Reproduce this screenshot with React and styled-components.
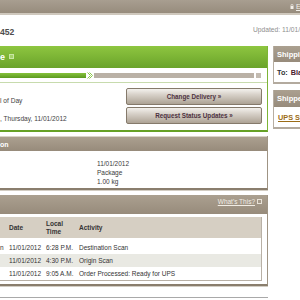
import React from "react";
import styled, { createGlobalStyle } from "styled-components";

const Global = createGlobalStyle`
  html, body { margin: 0; padding: 0; background: #fff; }
  body { font-family: "Liberation Sans", Arial, sans-serif; }
`;

const Page = styled.div`
  width: 300px;
  height: 300px;
  overflow: hidden;
  background: #fff;
`;

const TopBar = styled.div`
  height: 13px;
  border-bottom: 2px solid #cfc8bd;
  background: linear-gradient(#a89e90, #978c7d);
  display: flex;
  justify-content: flex-end;
  align-items: center;
  gap: 2px;
  font-size: 7px;
  color: #f4f0ea;
  white-space: nowrap;
  overflow: hidden;
`;

const TopLink = styled.span`
  margin-right: -19px;
  text-decoration: underline;
`;

const TitleRow = styled.div`
  height: 31px;
  display: flex;
  justify-content: space-between;
  align-items: flex-start;
  white-space: nowrap;
  overflow: hidden;
`;

const TrackNo = styled.div`
  margin-top: 12px;
  font-size: 8.6px;
  line-height: 10px;
  font-weight: bold;
  color: #4e4e4e;
`;

const Updated = styled.div`
  margin-top: 11px;
  margin-right: -15px;
  font-size: 6.7px;
  line-height: 8px;
  color: #8e8e8e;
`;

const Columns = styled.div`
  display: flex;
  gap: 5px;
  align-items: flex-start;
`;

const MainCol = styled.div`
  width: 268px;
  flex-shrink: 0;
`;

const SideCol = styled.div`
  width: 70px;
  flex-shrink: 0;
  white-space: nowrap;
  overflow: hidden;
`;

const GreenBox = styled.div`
  border-right: 1px solid #7db536;
  border-bottom: 2px solid #66a127;
`;

const GreenHeader = styled.div`
  height: 22px;
  background: linear-gradient(#8ec640, #6aa32a);
  display: flex;
  align-items: center;
  gap: 4px;
  color: #fff;
  font-weight: bold;
  font-size: 9px;
`;

const HeadIcon = styled.span`
  width: 3px;
  height: 3px;
  border: 1px solid #c9e6a4;
  background: #a3d26a;
  margin-top: -2px;
`;

const ProgressArea = styled.div`
  height: 15px;
  border-bottom: 1px solid #c7dbad;
  padding: 5px 6px 0 0;
  box-sizing: border-box;
`;

const Bar = styled.div`
  display: flex;
  align-items: center;
  height: 5px;
  gap: 1px;
`;

const GreenSeg = styled.div`
  width: 86px;
  height: 5px;
  background: linear-gradient(#86c23c, #5c9a1f);
`;

const GraySeg = styled.div`
  flex: 1;
  height: 5px;
  background: #bab1a6;
`;

const GraySq = styled.div`
  width: 5px;
  height: 5px;
  margin-left: 1px;
  background: #c3bbb1;
`;

const StatusBody = styled.div`
  height: 47px;
  display: flex;
  justify-content: space-between;
`;

const StatusText = styled.div`
  padding-top: 13px;
  font-size: 6.6px;
  line-height: 9px;
  color: #3f3f3f;
  white-space: nowrap;
`;

const StatusLine = styled.div`
  margin-bottom: ${(p) => p.$gap || 0}px;
`;

const Buttons = styled.div`
  width: 136px;
  margin-right: 5px;
  padding-top: 5px;
  display: flex;
  flex-direction: column;
  gap: 2px;
`;

const Button = styled.div`
  height: 15px;
  border: 1px solid #857a6b;
  border-radius: 2px;
  background: linear-gradient(#f3f1ed 0%, #d9d3cb 35%, #ada395 100%);
  display: flex;
  align-items: center;
  justify-content: center;
  font-size: 6.3px;
  font-weight: bold;
  color: #4d3140;
  white-space: nowrap;
`;

const Box = styled.div`
  margin-top: ${(p) => p.$top}px;
  border-right: 1px solid #9f9484;
  border-bottom: 2px solid #8a7e6d;
  box-shadow: 0 1px 0 #d3cdc3;
`;

const TaupeHeader = styled.div`
  height: ${(p) => p.$h}px;
  background: linear-gradient(#aba090, #978b7b);
  border-top: ${(p) => (p.$line ? "1px solid #d9d3c9" : "none")};
  display: flex;
  align-items: ${(p) => (p.$top ? "flex-start" : "center")};
  justify-content: ${(p) => (p.$right ? "flex-end" : "flex-start")};
  padding-top: ${(p) => (p.$top ? 3 : 0)}px;
  box-sizing: border-box;
  color: #fff;
  font-weight: bold;
  font-size: 7px;
`;

const InfoBody = styled.div`
  height: 37px;
  padding: 8px 0 0 97px;
  box-sizing: border-box;
  font-size: 6.5px;
  line-height: 9px;
  color: #3a3a3a;
`;

const WhatsThis = styled.span`
  display: flex;
  align-items: center;
  gap: 2px;
  margin-right: 5px;
  font-weight: normal;
  font-size: 6.5px;
  color: #f1ece4;
  text-decoration: underline;
`;

const InfoIcon = styled.span`
  width: 3px;
  height: 3px;
  border: 1px solid #e8e2d8;
`;

const ProgBody = styled.div`
  padding: 3px 5px 3px 0;
`;

const Table = styled.div`
  border-right: 1px solid #b9b1a6;
  border-bottom: 1px solid #b9b1a6;
  font-size: 6.5px;
  color: #333;
`;

const Row = styled.div`
  display: grid;
  grid-template-columns: 9px 37px 33px 1fr;
  align-items: center;
  height: ${(p) => p.$h || 13}px;
  padding-top: ${(p) => p.$pt || 0}px;
  box-sizing: border-box;
  background: ${(p) => p.$bg || "#fff"};
  font-weight: ${(p) => (p.$head ? "bold" : "normal")};
  line-height: 8px;
  white-space: nowrap;
`;

const Footer = styled.div`
  margin-top: 11px;
  border-top: 1px solid #a9a9a9;
`;

const SideBox = styled.div`
  margin-top: ${(p) => p.$top}px;
  border-left: 1px solid #b7aea2;
  border-bottom: 2px solid #b3aa9e;
`;

const SideHead = styled.div`
  height: ${(p) => p.$h}px;
  background: linear-gradient(#aba090, #978b7b);
  display: flex;
  align-items: center;
  padding-left: 3px;
  color: #fff;
  font-weight: bold;
  font-size: 7.5px;
`;

const SideBody = styled.div`
  height: 20px;
  display: flex;
  align-items: center;
  gap: 3px;
  padding-left: 3px;
  font-size: 7.3px;
  font-weight: bold;
  color: #333;
`;

const Maroon = styled.span`
  color: #4a2230;
`;

const Link = styled.span`
  color: #9c6c16;
  text-decoration: underline;
  padding-left: 1px;
`;

const rows = [
  { loc: "n", date: "11/01/2012", time: "6:28 P.M.", act: "Destination Scan" },
  { loc: "", date: "11/01/2012", time: "4:30 P.M.", act: "Origin Scan", bg: "#e9e9e3" },
  { loc: "", date: "11/01/2012", time: "9:05 A.M.", act: "Order Processed: Ready for UPS" },
];

export default function App() {
  return (
    <Page>
      <Global />
      <TopBar>
        <svg width="4" height="5" viewBox="0 0 4 5">
          <rect x="0.5" y="2" width="3" height="3" fill="#f2eee8" />
          <path d="M1 2V1.2a1 1 0 0 1 2 0V2" fill="none" stroke="#f2eee8" strokeWidth="0.7" />
        </svg>
        <TopLink>English</TopLink>
      </TopBar>
      <TitleRow>
        <TrackNo>452</TrackNo>
        <Updated>Updated: 11/01/2012</Updated>
      </TitleRow>
      <Columns>
        <MainCol>
          <GreenBox>
            <GreenHeader>
              <span>e</span>
              <HeadIcon />
            </GreenHeader>
            <ProgressArea>
              <Bar>
                <GreenSeg />
                <svg width="6" height="7" viewBox="0 0 6 7">
                  <path d="M0.5 0.5L3.5 3.5L0.5 6.5M2.5 0.5L5.5 3.5L2.5 6.5" fill="none" stroke="#8cc84a" strokeWidth="1" />
                </svg>
                <GraySeg />
                <GraySq />
              </Bar>
            </ProgressArea>
            <StatusBody>
              <StatusText>
                <StatusLine $gap={9}>l of Day</StatusLine>
                <StatusLine>, Thursday, 11/01/2012</StatusLine>
              </StatusText>
              <Buttons>
                <Button>Change Delivery »</Button>
                <Button>Request Status Updates »</Button>
              </Buttons>
            </StatusBody>
          </GreenBox>
          <Box $top={4}>
            <TaupeHeader $h={15} $line>on</TaupeHeader>
            <InfoBody>
              <div>11/01/2012</div>
              <div>Package</div>
              <div>1.00 kg</div>
            </InfoBody>
          </Box>
          <Box $top={5}>
            <TaupeHeader $h={19} $right $top>
              <WhatsThis>
                What's This? <InfoIcon />
              </WhatsThis>
            </TaupeHeader>
            <ProgBody>
              <Table>
                <Row $head $h={21} $bg="#d6cfc3">
                  <span />
                  <span>Date</span>
                  <span>
                    Local
                    <br />
                    Time
                  </span>
                  <span>Activity</span>
                </Row>
                {rows.map((r, i) => (
                  <Row key={i} $h={i === 0 ? 16 : 13} $pt={i === 0 ? 3 : 0} $bg={r.bg}>
                    <span>{r.loc}</span>
                    <span>{r.date}</span>
                    <span>{r.time}</span>
                    <span>{r.act}</span>
                  </Row>
                ))}
              </Table>
            </ProgBody>
          </Box>
          <Footer />
        </MainCol>
        <SideCol>
          <SideBox $top={0}>
            <SideHead $h={16}>Shipping To</SideHead>
            <SideBody>
              <span>To:</span>
              <Maroon>Blank</Maroon>
            </SideBody>
          </SideBox>
          <SideBox $top={6}>
            <SideHead $h={17}>Shipped By</SideHead>
            <SideBody>
              <Link>UPS Store</Link>
            </SideBody>
          </SideBox>
        </SideCol>
      </Columns>
    </Page>
  );
}
